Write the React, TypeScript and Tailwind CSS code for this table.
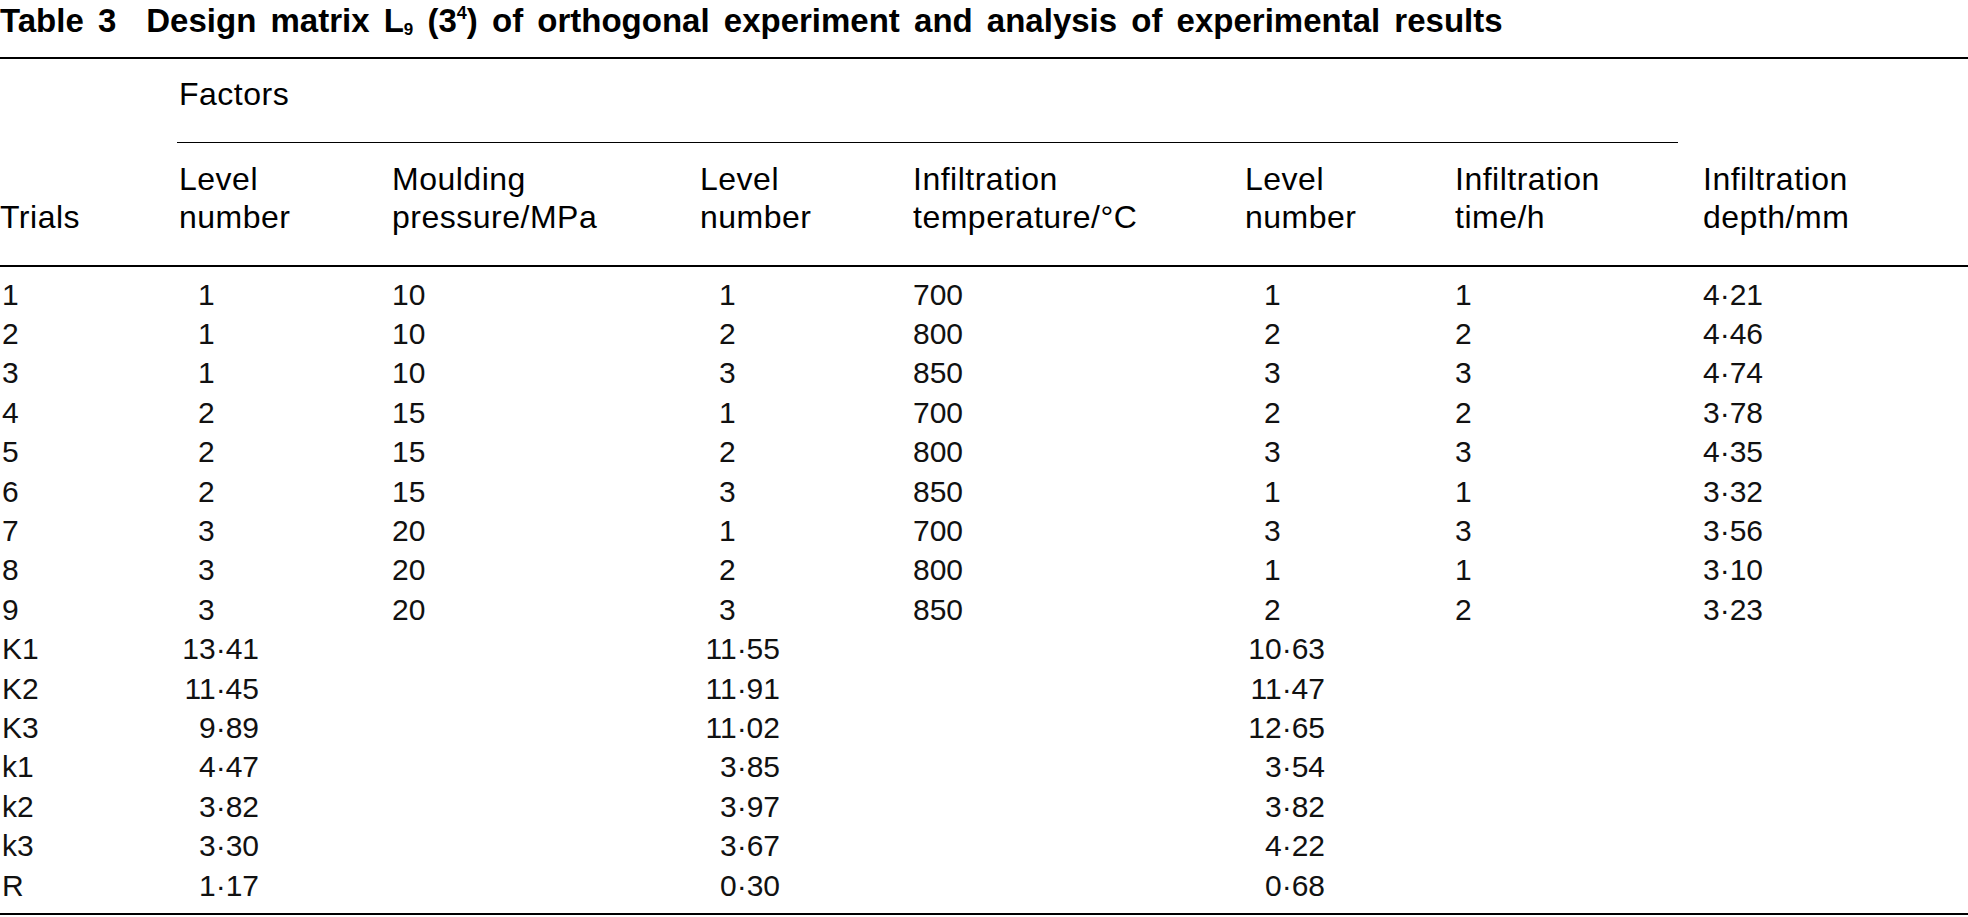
const cols = "grid grid-cols-[179px_213px_308px_213px_332px_210px_248px_1fr]";

type Row = { label: string; cells: string[] };

const trials: Row[] = [
  { label: "1", cells: ["1", "10", "1", "700", "1", "1", "4·21"] },
  { label: "2", cells: ["1", "10", "2", "800", "2", "2", "4·46"] },
  { label: "3", cells: ["1", "10", "3", "850", "3", "3", "4·74"] },
  { label: "4", cells: ["2", "15", "1", "700", "2", "2", "3·78"] },
  { label: "5", cells: ["2", "15", "2", "800", "3", "3", "4·35"] },
  { label: "6", cells: ["2", "15", "3", "850", "1", "1", "3·32"] },
  { label: "7", cells: ["3", "20", "1", "700", "3", "3", "3·56"] },
  { label: "8", cells: ["3", "20", "2", "800", "1", "1", "3·10"] },
  { label: "9", cells: ["3", "20", "3", "850", "2", "2", "3·23"] },
];

const stats: Row[] = [
  { label: "K1", cells: ["13·41", "", "11·55", "", "10·63", "", ""] },
  { label: "K2", cells: ["11·45", "", "11·91", "", "11·47", "", ""] },
  { label: "K3", cells: ["9·89", "", "11·02", "", "12·65", "", ""] },
  { label: "k1", cells: ["4·47", "", "3·85", "", "3·54", "", ""] },
  { label: "k2", cells: ["3·82", "", "3·97", "", "3·82", "", ""] },
  { label: "k3", cells: ["3·30", "", "3·67", "", "4·22", "", ""] },
  { label: "R", cells: ["1·17", "", "0·30", "", "0·68", "", ""] },
];

// level columns: integers sit indented, decimals are right aligned in a fixed box
const levelCols = [0, 2, 4];

function Cell({ value, index }: { value: string; index: number }) {
  if (!levelCols.includes(index) || value === "") return <div>{value}</div>;
  if (value.includes("·")) {
    return (
      <div>
        <span className="inline-block w-[80px] text-right">{value}</span>
      </div>
    );
  }
  return <div className="pl-[19px]">{value}</div>;
}

function Rule({ className = "" }: { className?: string }) {
  return <div className={`h-[1.5px] bg-black ${className}`} />;
}

export default function App() {
  const rows = [...trials, ...stats];
  return (
    <div className="w-full bg-white text-black font-['Liberation_Sans',Arial,sans-serif]">
      <div className="h-[57px] pt-[2px] text-[33px] leading-[38px] font-bold whitespace-nowrap [word-spacing:5px]">
        <span>Table 3</span>
        <span className="ml-[30px]">
          Design matrix L<span className="relative top-[3px] text-[17px] leading-none">9</span> (3
          <span className="relative -top-[13px] text-[18px] leading-none">4</span>) of orthogonal experiment and
          analysis of experimental results
        </span>
      </div>
      <Rule />

      <div className={`${cols} text-[32px] leading-[38px] tracking-[0.5px]`}>
        <div className="col-start-2 col-span-6 pt-[16px] pb-[29px]">Factors</div>
        <Rule className="col-start-2 col-span-6 -ml-[2px] mr-[25px]" />
      </div>

      <div className={`${cols} text-[32px] leading-[38px] tracking-[0.5px] pt-[17px] pb-[29px]`}>
        <div className="pt-[38px]">Trials</div>
        <div>Level<br />number</div>
        <div>Moulding<br />pressure/MPa</div>
        <div>Level<br />number</div>
        <div>Infiltration<br />temperature/°C</div>
        <div>Level<br />number</div>
        <div>Infiltration<br />time/h</div>
        <div>Infiltration<br />depth/mm</div>
      </div>
      <Rule />

      <div className="pt-[8px] pb-[8px] text-[30px] leading-[39.4px] text-[#111]">
        {rows.map((row) => (
          <div key={row.label} className={cols}>
            <div className="pl-[2px]">{row.label}</div>
            {row.cells.map((value, i) => (
              <Cell key={i} value={value} index={i} />
            ))}
          </div>
        ))}
      </div>
      <Rule />
    </div>
  );
}
